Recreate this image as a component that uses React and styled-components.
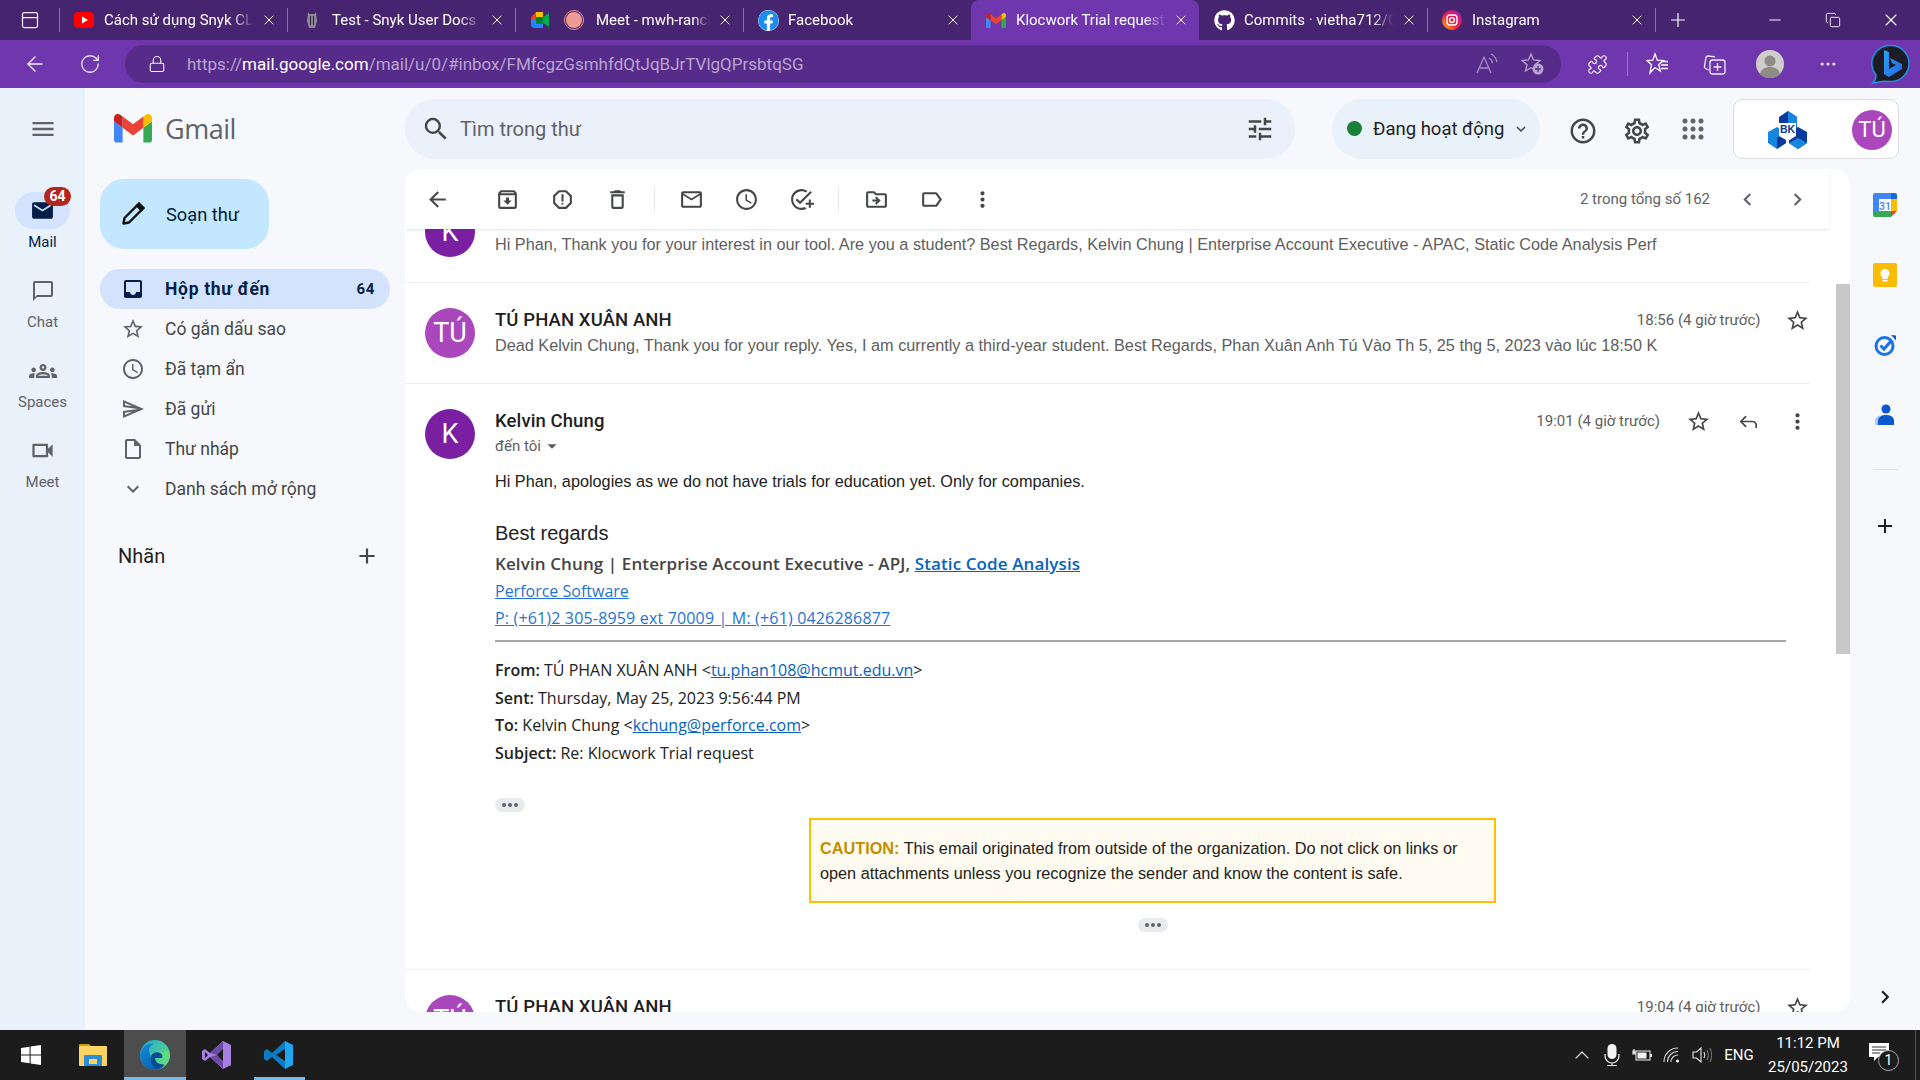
import styled, { createGlobalStyle } from "styled-components";
import { ArrowLeft, RotateCw, Lock, Minus, Plus, X, ChevronUp, PanelTop, Copy, MoreHorizontal, Puzzle, Reply } from "lucide-react";
import { FaFacebook, FaGithub } from "react-icons/fa";
import {
  MdArrowBack,
  MdOutlineArchive,
  MdOutlineReport,
  MdOutlineDelete,
  MdMailOutline,
  MdOutlineSchedule,
  MdOutlineAddTask,
  MdOutlineDriveFileMove,
  MdOutlineLabel,
  MdMoreVert,
  MdChevronLeft,
  MdChevronRight,
  MdStarBorder,
  MdArrowDropDown,
  MdSearch,
  MdOutlineTune,
  MdOutlineHelpOutline,
  MdOutlineSettings,
  MdExpandMore,
  MdMenu,
  MdMail,
  MdOutlineChatBubbleOutline,
  MdOutlineGroups,
  MdOutlineVideocam,
  MdInbox,
  MdOutlineSend,
  MdOutlineInsertDriveFile,
  MdAdd,
} from "react-icons/md";

const GlobalStyle = createGlobalStyle`
  html, body { margin: 0; padding: 0; background: #f6f8fc; }
  * { box-sizing: border-box; }
  body { font-family: "Roboto", "Liberation Sans", sans-serif; }
`;

const tabs = [
  { title: "Cách sử dụng Snyk CLI", icon: "youtube" },
  { title: "Test - Snyk User Docs", icon: "snyk" },
  { title: "Meet - mwh-rancher", icon: "meet" },
  { title: "Facebook", icon: "facebook" },
  { title: "Klocwork Trial request", icon: "gmail", active: true },
  { title: "Commits · vietha712/Cpp", icon: "github" },
  { title: "Instagram", icon: "instagram" },
];

function GmailLogo({ size = 38 }) {
  return (
    <svg width={size} height={size * 0.75} viewBox="52 42 88 66">
      <path fill="#4285f4" d="M58 108h14V74L52 59v43c0 3.32 2.69 6 6 6" />
      <path fill="#34a853" d="M120 108h14c3.32 0 6-2.69 6-6V59l-20 15" />
      <path fill="#fbbc04" d="M120 48v26l20-15v-8c0-7.42-8.47-11.65-14.4-7.2" />
      <path fill="#ea4335" d="M72 74V48l24 18 24-18v26L96 92" />
      <path fill="#c5221f" d="M52 51v8l20 15V48l-5.6-4.2c-5.94-4.45-14.4-.22-14.4 7.2" />
    </svg>
  );
}

function TabIcon({ name }) {
  if (name === "youtube")
    return (
      <svg width="22" height="22" viewBox="0 0 22 22">
        <rect x="1" y="3" width="20" height="16" rx="4" fill="#f00" />
        <path d="M9 7.5v7l6-3.5z" fill="#fff" />
      </svg>
    );
  if (name === "snyk")
    return (
      <svg width="20" height="20" viewBox="0 0 20 20">
        <path d="M6 2l1.5 2h5L14 2l1 9-2 7H7l-2-7z" fill="#8c8794" />
        <path d="M8 6h1v9H8zM11 6h1v9h-1z" fill="#2c2440" />
      </svg>
    );
  if (name === "meet")
    return (
      <svg width="20" height="20" viewBox="0 0 20 20">
        <path d="M1 7l5-5h7v5H6v3H1z" fill="#ea4335" />
        <path d="M6 2h7v5H6z" fill="#fbbc04" />
        <path d="M1 10h5v4h7v4H5a4 4 0 0 1-4-4z" fill="#2684fc" />
        <path d="M6 7h7v7H6z" fill="#00832d" />
        <path d="M13 7l6-4v14l-6-4z" fill="#00ac47" />
      </svg>
    );
  if (name === "facebook") return <FaFacebook size={21} color="#1b8cf2" style={{ background: "#fff", borderRadius: "50%" }} />;
  if (name === "gmail") return <GmailLogo size={20} />;
  if (name === "github") return <FaGithub size={21} color="#fff" />;
  return (
    <svg width="20" height="20" viewBox="0 0 20 20">
      <defs>
        <linearGradient id="ig" x1="0" y1="1" x2="1" y2="0">
          <stop offset="0" stopColor="#fdc70c" />
          <stop offset="0.45" stopColor="#f0203f" />
          <stop offset="1" stopColor="#a517c4" />
        </linearGradient>
      </defs>
      <circle cx="10" cy="10" r="10" fill="url(#ig)" />
      <rect x="5" y="5" width="10" height="10" rx="3" fill="none" stroke="#fff" strokeWidth="1.4" />
      <circle cx="10" cy="10" r="2.4" fill="none" stroke="#fff" strokeWidth="1.4" />
    </svg>
  );
}

function ReadAloudIcon() {
  return (
    <svg width="26" height="24" viewBox="0 0 26 24" fill="none" stroke="#a58fc4" strokeWidth="1.3">
      <path d="M3 21L10 5l7 16M5.5 16h9" />
      <path d="M15 6c2 1 3 2.5 3.5 5M17 2c3.500 1.500 5 4 6 8" />
    </svg>
  );
}

function FavAddIcon() {
  return (
    <svg width="24" height="24" viewBox="0 0 24 24" fill="none">
      <path d="M10 2l2.500 6 6.500.5-5 4.200 1.500 6.300L10 15.700 4.500 19 6 12.700 1 8.500 7.500 8z" stroke="#b7a5cf" strokeWidth="1.3" />
      <circle cx="17" cy="17" r="5.500" fill="#b7a5cf" />
      <path d="M17 14v6M14 17h6" stroke="#572b8a" strokeWidth="1.3" />
    </svg>
  );
}

function FavoritesIcon() {
  return (
    <svg width="24" height="24" viewBox="0 0 24 24" fill="none" stroke="#fff" strokeWidth="1.3">
      <path d="M9 2l2.300 6.200 6.200.4-4.800 4L14.300 19 9 15.500 4 21l1.500-8.300L1 8.600l5.800-.4z" />
      <path d="M15 9.500h7M15 13h7M15 16.500h7" />
    </svg>
  );
}

function CollectionsIcon() {
  return (
    <svg width="24" height="24" viewBox="0 0 24 24" fill="none" stroke="#f1ecf7" strokeWidth="1.3">
      <path d="M6 18l-3.500-1.500a2 2 0 0 1-1-2.500L3 5.500A2 2 0 0 1 5.200 4L12 4.800" />
      <rect x="7" y="8" width="15" height="14" rx="2.500" />
      <path d="M14.500 11v8M10.500 15h8" />
    </svg>
  );
}

function ProfileIcon() {
  return (
    <svg width="28" height="28" viewBox="0 0 28 28">
      <circle cx="14" cy="14" r="14" fill="#cfcdc9" />
      <circle cx="14" cy="11" r="5.500" fill="#8f8c88" />
      <path d="M4 24c1-5 5-7 10-7s9 2 10 7a14 14 0 0 1-20 0z" fill="#8f8c88" />
    </svg>
  );
}

function BingLogo() {
  return (
    <svg width="40" height="40" viewBox="0 0 40 40">
      <defs>
        <linearGradient id="bingB" x1="0" y1="0" x2="1" y2="1">
          <stop offset="0" stopColor="#29a3f2" />
          <stop offset="1" stopColor="#2a66e0" />
        </linearGradient>
      </defs>
      <path d="M21 1.500a18 18 0 0 1 0 36c-3 0-7-.500-9 0l-9 1.500c2-2 3-4 3-8A18 18 0 0 1 21 1.500z" fill="#1c1c26" stroke="#1d95e6" strokeWidth="1.500" />
      <path d="M14 6l5 2v17l7-4-4-2-2-5 12 6v5l-13 8-5-3z" fill="url(#bingB)" />
    </svg>
  );
}

function BkLogo() {
  return (
    <svg width="39" height="38" viewBox="0 0 39 38">
      <path d="M20 0l9 6v11l-9 5-9-5V6z" fill="#0a3a9c" />
      <path d="M20 0l9 6v11l-9-5z" fill="#1687e0" />
      <path d="M0 21l9-5 9 5v11l-9 6-9-6z" fill="#1687e0" />
      <path d="M9 27l9-6v11l-9 6z" fill="#0a3a9c" />
      <path d="M21 21l9-5 9 5v11l-9 6-9-6z" fill="#0a3a9c" />
      <path d="M21 32l9-5 9 5-9 6z" fill="#1687e0" />
      <path d="M11 12h17v13l-8 5-9-5z" fill="#fff" />
      <text x="19.500" y="22" textAnchor="middle" fontSize="10.500" fontWeight="700" fill="#0a3a9c" fontFamily="Liberation Sans, sans-serif">BK</text>
    </svg>
  );
}

function AppsDots() {
  const dots = [];
  for (let r = 0; r < 3; r++) for (let c = 0; c < 3; c++) dots.push(<circle key={`${r}${c}`} cx={5 + c * 8} cy={5 + r * 8} r="2.5" fill="#5f6368" />);
  return (
    <svg width="26" height="26" viewBox="0 0 26 26">
      {dots}
    </svg>
  );
}

function PencilIcon() {
  return (
    <svg width="28" height="28" viewBox="0 0 28 28" fill="none" stroke="#111" strokeWidth="2.400">
      <path d="M4.500 23.500l1-5.500L18 5.500l4.500 4.500L10 22.500z" strokeLinejoin="round" />
      <path d="M18 5.500l2-2 4.500 4.500-2 2z" fill="#111" />
    </svg>
  );
}

function CalendarIcon() {
  return (
    <svg width="24" height="24" viewBox="0 0 24 24">
      <rect x="0" y="0" width="24" height="24" rx="2" fill="#fff" />
      <path d="M2 0h16v6H6v12H0V2a2 2 0 0 1 2-2z" fill="#4285f4" />
      <path d="M18 0h4a2 2 0 0 1 2 2v4h-6z" fill="#1967d2" />
      <path d="M18 6h6v12h-6z" fill="#fbbc04" />
      <path d="M0 18h18v6H2a2 2 0 0 1-2-2z" fill="#34a853" />
      <path d="M18 18h6l-6 6z" fill="#ea4335" />
      <text x="12" y="16.500" textAnchor="middle" fontSize="10.500" fontWeight="500" fill="#4285f4" fontFamily="Roboto, sans-serif">31</text>
    </svg>
  );
}

function KeepIcon() {
  return (
    <svg width="24" height="24" viewBox="0 0 24 24">
      <rect width="24" height="24" rx="2" fill="#fbbc04" />
      <circle cx="12" cy="10.500" r="4.500" fill="#fff" />
      <rect x="9.500" y="14" width="5" height="2" fill="#fff" />
      <rect x="9.500" y="17" width="5" height="1.500" fill="#fff" />
    </svg>
  );
}

function TasksIcon() {
  return (
    <svg width="24" height="24" viewBox="0 0 24 24" fill="none">
      <circle cx="11.500" cy="13" r="8.500" stroke="#1a73e8" strokeWidth="3" />
      <path d="M7.500 12.500l3.500 3.500 8-9" stroke="#1a73e8" strokeWidth="3" />
      <path d="M18 2l5 .5v5z" fill="#0b57d0" />
    </svg>
  );
}

function ContactsIcon() {
  return (
    <svg width="24" height="24" viewBox="0 0 24 24">
      <circle cx="13" cy="6" r="4.500" fill="#0b57d0" />
      <path d="M2 22v-4c0-4 4-6 9-6h4c3 0 6 2 6 6v4z" fill="#a8c7fa" />
      <path d="M5 22v-4c0-4 4-6 8-6s8 2 8 6v4z" fill="#0b57d0" />
    </svg>
  );
}

function WindowsLogo() {
  return (
    <svg width="20" height="20" viewBox="0 0 20 20" fill="#fff">
      <path d="M0 3l8.6-1.2v7.7H0zM9.6 1.6L20 0v9.500H9.600zM0 10.500h8.600v7.700L0 17zM9.600 10.500H20V20L9.600 18.400z" />
    </svg>
  );
}

function ExplorerLogo() {
  return (
    <svg width="28" height="24" viewBox="0 0 28 24">
      <path d="M0 2a1 1 0 0 1 1-1h9l2 2h-12z" fill="#d19a0b" />
      <rect x="0" y="3" width="28" height="20" rx="1" fill="#fcd45f" />
      <rect x="5" y="12" width="18" height="11" rx="1" fill="#2b8fd8" />
      <rect x="10" y="16" width="8" height="5" fill="#fcd45f" />
    </svg>
  );
}

function EdgeLogo() {
  return (
    <svg width="32" height="32" viewBox="0 0 32 32">
      <defs>
        <linearGradient id="edgeA" x1="0" y1="0" x2="1" y2="0.8">
          <stop offset="0" stopColor="#1fa6d8" />
          <stop offset="1" stopColor="#63e07a" />
        </linearGradient>
        <linearGradient id="edgeB" x1="0" y1="0" x2="0.8" y2="1">
          <stop offset="0" stopColor="#0f8fdb" />
          <stop offset="1" stopColor="#0c5aa8" />
        </linearGradient>
      </defs>
      <circle cx="16" cy="16" r="15" fill="url(#edgeA)" />
      <path d="M1 16C2 7 9 4 15 5c-6 2-6 7-3 13 3 6 9 9 14 8-3 3-6 5-10 5C7 31 1 24 1 16z" fill="url(#edgeB)" />
      <path d="M12 19c0-5 5-7 9-5 3 1 3 4 2 5h-7c0 4 4 7 9 6-2 3-5 5-7 5-4-1-6-6-6-11z" fill="#0a4a92" />
      <path d="M21 14c3 1 3 4 2 5h8c0-2 0-4-1-6-3-1-6 0-9 1z" fill="#5fdc7c" />
    </svg>
  );
}

function VsLogo() {
  return (
    <svg width="30" height="30" viewBox="0 0 30 30">
      <path d="M21 1l8 4v20l-8 4-13-12-5 4-3-2V11l3-2 5 4z" fill="#a67fe0" />
      <path d="M21 1v28l-13-12 7-2V15L8 13z" fill="#6e4aa8" />
      <path d="M21 9l-6 6 6 6z" fill="#1c1c1c" />
      <path d="M3 12v6l3-3z" fill="#1c1c1c" />
    </svg>
  );
}

function VscodeLogo() {
  return (
    <svg width="30" height="30" viewBox="0 0 30 30">
      <path d="M21 1l8 4v20l-8 4z" fill="#1fa8f1" />
      <path d="M21 1L8 13 3 9 0 11v8l3 2 5-4 13 12V21l-9-6 9-6z" fill="#0a7cc4" />
    </svg>
  );
}

function MicIcon() {
  return (
    <svg width="16" height="22" viewBox="0 0 16 22" fill="none">
      <rect x="3.500" y="0" width="9" height="15" rx="4.500" fill="#f2f2f2" />
      <path d="M1 10v2a7 7 0 0 0 14 0v-2M8 19v2.500M3 21.500h10" stroke="#f2f2f2" strokeWidth="1.200" />
    </svg>
  );
}

function BatteryIcon() {
  return (
    <svg width="20" height="14" viewBox="0 0 20 14" fill="none">
      <path d="M0.500 4.500h3M2 1v2M1 3h2v3H1z" stroke="#f2f2f2" strokeWidth="1.200" />
      <rect x="4" y="3" width="14" height="9" stroke="#f2f2f2" />
      <rect x="5.500" y="4.500" width="9" height="6" fill="#f2f2f2" />
      <rect x="18" y="6" width="2" height="3" fill="#f2f2f2" />
    </svg>
  );
}

function WifiIcon() {
  return (
    <svg width="18" height="18" viewBox="0 0 18 18" fill="none" stroke="#cfcfcf" strokeWidth="1.100">
      <path d="M1 16C1 8 7 2 15 2M4.500 16c0-6 4.500-10.500 10.500-10.500M8 16c0-4 3-7 7-7" />
      <circle cx="14.500" cy="15" r="1.600" fill="#f2f2f2" stroke="none" />
    </svg>
  );
}

function SpeakerIcon() {
  return (
    <svg width="20" height="20" viewBox="0 0 20 20" fill="none" stroke="#e8e8e8" strokeWidth="1.100">
      <path d="M1 7h3.500L9 3v14l-4.500-4H1z" />
      <path d="M12 7c1 2 1 4 0 6" />
      <path d="M15 5c1.500 3 1.500 7 0 10M18 3c2 4 2 10 0 14" stroke="#777" />
    </svg>
  );
}

function NotifyIcon() {
  return (
    <svg width="20" height="19" viewBox="0 0 20 19">
      <path d="M0 0h20v14H9l-4 4v-4H0z" fill="#fff" />
      <path d="M3 4h14M3 7h14M3 10h8" stroke="#333" strokeWidth="1" />
    </svg>
  );
}

const Page = styled.div`
  width: 1920px;
  height: 1080px;
  display: flex;
  flex-direction: column;
  overflow: hidden;
  background: #f6f8fc;
`;

const TabStrip = styled.div`
  height: 40px;
  flex: none;
  display: flex;
  align-items: stretch;
  background: #46246f;
  color: #fff;
  font-size: 15px;
`;

const StripToggle = styled.div`
  width: 59px;
  display: flex;
  align-items: center;
  justify-content: center;
  color: #f2eef8;
`;

const Tab = styled.div`
  width: 228px;
  flex: none;
  display: flex;
  align-items: center;
  position: relative;
  padding: 0 10px 0 14px;
  gap: 7px;
  background: ${(p) => (p.$active ? "#6f36ad" : "transparent")};
  border-radius: ${(p) => (p.$active ? "8px 8px 0 0" : "0")};
  &::before {
    content: "";
    display: ${(p) => (p.$plain ? "none" : "block")};
    position: absolute;
    left: 0;
    top: 8px;
    bottom: 8px;
    width: 1px;
    background: #8a73a6;
  }
`;

const TabEnd = styled.div`
  width: 1px;
  flex: none;
  margin: 8px 0;
  background: #8a73a6;
`;

const TabIconBox = styled.div`
  width: 22px;
  height: 22px;
  flex: none;
  display: flex;
  align-items: center;
  justify-content: center;
`;

const RecDot = styled.div`
  width: 20px;
  height: 20px;
  flex: none;
  margin: 0 3px 0 6px;
  border-radius: 50%;
  background: #ef9a92;
  border: 2px solid #46246f;
  outline: 1.5px solid #ef9a92;
  outline-offset: -1px;
`;

const TabTitle = styled.div`
  flex: 1;
  min-width: 0;
  white-space: nowrap;
  overflow: hidden;
  padding-left: 2px;
  mask-image: linear-gradient(to right, #000 85%, transparent);
`;

const WinButtons = styled.div`
  margin-left: auto;
  display: flex;
  align-items: center;
`;

const WinButton = styled.div`
  width: 58px;
  display: flex;
  justify-content: center;
  color: #fff;
`;

const PlusBox = styled.div`
  width: 44px;
  display: flex;
  align-items: center;
  justify-content: center;
`;

const ToolBar = styled.div`
  height: 48px;
  flex: none;
  display: flex;
  align-items: center;
  background: #6f36ad;
  color: #f1ecf7;
  padding-left: 23px;
`;

const BarIcon = styled.div`
  width: 24px;
  height: 24px;
  flex: none;
  display: flex;
  align-items: center;
  justify-content: center;
  margin-left: ${(p) => (p.$auto ? "auto" : `${p.$ml || 0}px`)};
  color: ${(p) => p.$color || "inherit"};
  svg {
    flex: none;
  }
`;

const BarSep = styled.div`
  width: 1px;
  height: 24px;
  background: #9b77c9;
  margin-left: 18px;
  margin-right: 18px;
`;

const AddressPill = styled.div`
  width: 1436px;
  height: 38px;
  margin-left: 23px;
  flex: none;
  display: flex;
  align-items: center;
  border-radius: 19px;
  background: #572b8a;
  padding: 0 16px 0 20px;
`;

const Url = styled.div`
  margin-left: 18px;
  font-size: 17px;
  color: #b7a5cf;
  white-space: nowrap;
  span {
    color: #fff;
  }
`;

const Avatar = styled.div`
  width: ${(p) => p.$size || 50}px;
  height: ${(p) => p.$size || 50}px;
  flex: none;
  border-radius: 50%;
  background: ${(p) => p.$bg};
  color: #fff;
  display: flex;
  align-items: center;
  justify-content: center;
  font-size: ${(p) => p.$font || 27}px;
`;

const Main = styled.div`
  flex: 1;
  min-height: 0;
  display: flex;
`;

const Rail = styled.nav`
  width: 85px;
  flex: none;
  background: #e9f1fb;
  padding-top: 29px;
  display: flex;
  flex-direction: column;
  align-items: center;
`;

const RailMenu = styled.div`
  height: 24px;
  margin-bottom: 51px;
  display: flex;
  align-items: center;
  color: #5f6368;
`;

const RailItem = styled.div`
  width: 85px;
  height: 80px;
  display: flex;
  flex-direction: column;
  align-items: center;
`;

const RailPill = styled.div`
  width: 55px;
  height: 37px;
  border-radius: 18.5px;
  position: relative;
  display: flex;
  align-items: center;
  justify-content: center;
  background: ${(p) => (p.$active ? "#d3e3fd" : "transparent")};
  color: ${(p) => (p.$active ? "#041e49" : "#5f6368")};
`;

const RailBadge = styled.div`
  position: absolute;
  left: 29px;
  top: -5px;
  width: 27px;
  height: 19px;
  border-radius: 10px;
  background: #b3261e;
  color: #fff;
  font-size: 14px;
  font-weight: 700;
  text-align: center;
  line-height: 19px;
`;

const RailLabel = styled.div`
  margin-top: 4px;
  font-size: 15px;
  line-height: 18px;
  color: ${(p) => (p.$active ? "#041e49" : "#5f6368")};
`;

const Center = styled.div`
  flex: 1;
  min-width: 0;
  display: flex;
  flex-direction: column;
`;

const Header = styled.header`
  height: 81px;
  flex: none;
  display: flex;
  align-items: center;
`;

const Brand = styled.div`
  width: 320px;
  flex: none;
  padding-left: 29px;
  display: flex;
  align-items: center;
  gap: 13px;
`;

const BrandName = styled.div`
  font-size: 27px;
  color: #5f6368;
  font-family: "Open Sans", sans-serif;
  letter-spacing: -0.5px;
`;

const Search = styled.div`
  width: 890px;
  height: 60px;
  flex: none;
  border-radius: 30px;
  background: #eaf1fb;
  display: flex;
  align-items: center;
  padding: 0 20px 0 16px;
  color: #444746;
`;

const SearchText = styled.div`
  margin-left: 9px;
  flex: 1;
  font-size: 20px;
  color: #5f6368;
`;

const Status = styled.div`
  width: 208px;
  height: 60px;
  margin-left: 37px;
  flex: none;
  border-radius: 30px;
  background: #e9f1fb;
  display: flex;
  align-items: center;
  padding-left: 15px;
  font-size: 18.5px;
  color: #1f1f1f;
`;

const StatusDot = styled.div`
  width: 15px;
  height: 15px;
  border-radius: 50%;
  background: #188038;
  margin-right: 11px;
`;

const HeadIcon = styled.div`
  width: 30px;
  height: 30px;
  flex: none;
  margin-left: ${(p) => p.$ml}px;
  margin-top: ${(p) => p.$mt || 0}px;
  display: flex;
  align-items: center;
  justify-content: center;
  color: #444746;
`;

const Account = styled.div`
  width: 166px;
  height: 60px;
  margin-left: 25px;
  flex: none;
  display: flex;
  align-items: center;
  padding: 2px 6px 0 34px;
  gap: 45px;
  background: #fff;
  border: 1px solid #dadce0;
  border-radius: 10px;
`;

const Below = styled.div`
  flex: 1;
  min-height: 0;
  display: flex;
`;

const Sidebar = styled.aside`
  width: 320px;
  flex: none;
  padding-top: 10px;
`;

const Compose = styled.div`
  width: 169px;
  height: 70px;
  margin-left: 15px;
  border-radius: 24px;
  background: #c2e7ff;
  display: flex;
  align-items: center;
  padding-left: 19px;
  gap: 19px;
  font-size: 18.25px;
  color: #001d35;
`;

const NavList = styled.div`
  margin-top: 20px;
`;

const NavRow = styled.div`
  width: 290px;
  height: 40px;
  margin-left: 15px;
  border-radius: 20px;
  background: ${(p) => (p.$active ? "#d3e3fd" : "transparent")};
  color: ${(p) => (p.$active ? "#041e49" : "#444746")};
  font-weight: ${(p) => (p.$active ? 700 : 400)};
  letter-spacing: ${(p) => (p.$active ? "0.7px" : "0")};
  display: flex;
  align-items: center;
  padding: 0 15px 0 20.5px;
  gap: 20.5px;
  font-size: 17.5px;
  svg {
    color: ${(p) => (p.$active ? "#041e49" : "#5f6368")};
  }
`;

const NavCount = styled.div`
  margin-left: auto;
  font-size: 15px;
`;

const LabelsHead = styled.div`
  height: 30px;
  margin: 32px 25px 0 33px;
  display: flex;
  align-items: center;
  justify-content: space-between;
  font-size: 20px;
  color: #1f1f1f;
  svg {
    color: #444746;
  }
`;

const Card = styled.main`
  width: 1445px;
  flex: none;
  height: 843px;
  background: #fff;
  border-radius: 16px;
  display: flex;
  flex-direction: column;
  overflow: hidden;
`;

const CardBar = styled.div`
  height: 60px;
  flex: none;
  margin-right: 21px;
  display: flex;
  align-items: center;
  padding: 0 19px 0 20px;
  position: relative;
  z-index: 2;
  background: #fff;
  box-shadow: 0 1px 2px rgba(60, 64, 67, 0.15);
  color: #444746;
`;

const BarGroup = styled.div`
  display: flex;
  gap: ${(p) => p.$gap ?? 30}px;
  margin-left: ${(p) => p.$ml || 0}px;
`;

const ToolDivider = styled.div`
  width: 1px;
  height: 24px;
  margin: 0 ${(p) => p.$mr ?? 24.5}px 0 24px;
  background: #e3e5e8;
`;

const Pager = styled.div`
  margin-left: auto;
  display: flex;
  align-items: center;
  gap: 25px;
  font-size: 15px;
  color: #5f6368;
`;

const PagerArrows = styled.div`
  display: flex;
  gap: 25px;
`;

const CardBody = styled.div`
  flex: 1;
  min-height: 0;
  display: flex;
`;

const Thread = styled.div`
  width: 1405px;
  flex: none;
  overflow: hidden;
`;

const ScrollTrack = styled.div`
  margin-left: 26px;
  width: 14px;
  flex: none;
  padding-top: 55px;
`;

const ScrollThumb = styled.div`
  height: 370px;
  background: #c8c8c8;
`;

const Message = styled.article`
  display: flex;
  align-items: flex-start;
  gap: 20px;
  padding: 25px 0 ${(p) => p.$pb ?? 25}px 20px;
  margin-top: ${(p) => p.$mt || 0}px;
  border-bottom: 1px solid #eceff1;
`;

const MessageMain = styled.div`
  flex: 1;
  min-width: 0;
`;

const MetaRow = styled.div`
  height: 24px;
  display: flex;
  align-items: center;
  color: #444746;
`;

const Sender = styled.div`
  font-size: 18.5px;
  font-weight: 500;
  letter-spacing: 0.1px;
  color: #1f1f1f;
  margin-right: auto;
`;

const Time = styled.div`
  font-size: 15px;
  color: #5e5e5e;
  margin-right: ${(p) => p.$mr}px;
`;

const MetaIcon = styled.div`
  width: 25px;
  height: 25px;
  flex: none;
  display: flex;
  align-items: center;
  justify-content: center;
  margin-left: ${(p) => p.$ml || 0}px;
`;

const Snippet = styled.div`
  margin-top: 1px;
  font-family: "Liberation Sans", Arial, sans-serif;
  font-size: 16.25px;
  line-height: 24px;
  color: #5e5e5e;
  white-space: nowrap;
`;

const ToMe = styled.div`
  margin-top: 1px;
  display: flex;
  align-items: center;
  font-size: 15px;
  line-height: 24px;
  color: #5e5e5e;
`;

const BodyLine = styled.div`
  margin-top: 11px;
  font-family: "Liberation Sans", Arial, sans-serif;
  font-size: 16.25px;
  line-height: 24px;
  color: #222;
`;

const Regards = styled.div`
  margin-top: 26px;
  font-family: "Liberation Sans", Arial, sans-serif;
  font-size: 20px;
  line-height: 28px;
  color: #222;
`;

const Signature = styled.div`
  margin-top: 3px;
  font-family: "Open Sans", sans-serif;
  font-size: 17px;
  font-weight: 600;
  line-height: 28px;
  color: #444;
  letter-spacing: 0.11px;
  a {
    color: #0563c1;
    text-decoration: underline;
  }
`;

const SigLink = styled.a`
  display: block;
  font-family: "Open Sans", sans-serif;
  font-size: 16px;
  line-height: 27px;
  letter-spacing: ${(p) => p.$ls || 0}px;
  color: #1f74cf;
  text-decoration: underline;
`;

const Rule = styled.div`
  height: 2px;
  margin: 8px 24px 0 0;
  background: #a6a6a6;
`;

const Headers = styled.div`
  margin-top: 15px;
  font-family: "Open Sans", sans-serif;
  font-size: 16px;
  line-height: 27.6px;
  color: #222;
  b {
    font-weight: 600;
  }
  a {
    color: #0563c1;
    text-decoration: underline;
  }
`;

const Dots = styled.div`
  width: 30px;
  height: 14px;
  border-radius: 7px;
  margin: ${(p) => p.$m};
  background: #e8eaed;
  color: #5f6368;
  display: flex;
  align-items: center;
  justify-content: center;
  gap: 2px;
  i {
    width: 4px;
    height: 4px;
    border-radius: 50%;
    background: #5f6368;
  }
`;

const Caution = styled.div`
  width: 687px;
  height: 85px;
  margin: 6px auto 0;
  padding: 15.5px 9px 0 9px;
  border: 2.5px solid #ffc000;
  background: #fffbf0;
  font-family: "Liberation Sans", Arial, sans-serif;
  font-size: 16.25px;
  line-height: 25px;
  color: #222;
  b {
    color: #c28e00;
  }
`;

const SidePanel = styled.aside`
  flex: 1;
  padding: 24px 0 21px;
  display: flex;
  flex-direction: column;
  align-items: center;
`;

const SideIcon = styled.div`
  width: 24px;
  height: 24px;
  flex: none;
  margin-bottom: ${(p) => p.$mb ?? 46}px;
  display: flex;
  align-items: center;
  justify-content: center;
  color: ${(p) => p.$color || "#1f1f1f"};
`;

const SideRule = styled.div`
  width: 25px;
  height: 1px;
  flex: none;
  background: #dfe3e8;
  margin: -3px 0 44px;
`;

const SideEnd = styled.div`
  margin-top: auto;
  height: 24px;
  display: flex;
  align-items: center;
  color: #1f1f1f;
`;

const Taskbar = styled.footer`
  height: 50px;
  flex: none;
  display: flex;
  background: #1c1c1c;
  color: #fff;
`;

const TaskButton = styled.div`
  width: 62px;
  height: 50px;
  flex: none;
  position: relative;
  display: flex;
  align-items: center;
  justify-content: center;
  background: ${(p) => (p.$active ? "#4d4d4d" : "transparent")};
  &::after {
    content: "";
    display: ${(p) => (p.$running ? "block" : "none")};
    position: absolute;
    left: ${(p) => (p.$active ? 0 : 6)}px;
    right: ${(p) => (p.$active ? 0 : 5)}px;
    bottom: 0;
    height: 3px;
    background: #76b9ed;
  }
`;

const Tray = styled.div`
  margin-left: auto;
  display: flex;
  align-items: center;
`;

const TrayIcon = styled.div`
  width: 30px;
  display: flex;
  justify-content: center;
  color: #e8e8e8;
`;

const Lang = styled.div`
  width: 44px;
  text-align: center;
  font-size: 15px;
`;

const Clock = styled.div`
  width: 94px;
  text-align: center;
  font-size: 15px;
  line-height: 24px;
`;

const Notify = styled.div`
  width: 48px;
  height: 40px;
  position: relative;
  display: flex;
  align-items: center;
  justify-content: center;
  padding-bottom: 6px;
`;

const NotifyCount = styled.div`
  position: absolute;
  left: 23px;
  top: 15px;
  width: 21px;
  height: 21px;
  border-radius: 50%;
  border: 1px solid #aaa;
  background: #1c1c1c;
  font-size: 14px;
  line-height: 19px;
  text-align: center;
`;

const DesktopEdge = styled.div`
  width: 13px;
  align-self: stretch;
  border-right: 1px solid #555;
  margin-right: 4px;
`;

const railItems = [
  { label: "Mail", icon: <MdMail size={25} />, active: true, badge: "64" },
  { label: "Chat", icon: <MdOutlineChatBubbleOutline size={24} /> },
  { label: "Spaces", icon: <MdOutlineGroups size={28} /> },
  { label: "Meet", icon: <MdOutlineVideocam size={27} /> },
];

const navItems = [
  { label: "Hộp thư đến", icon: <MdInbox size={24} />, active: true, count: "64" },
  { label: "Có gắn dấu sao", icon: <MdStarBorder size={24} /> },
  { label: "Đã tạm ẩn", icon: <MdOutlineSchedule size={24} /> },
  { label: "Đã gửi", icon: <MdOutlineSend size={24} /> },
  { label: "Thư nháp", icon: <MdOutlineInsertDriveFile size={24} /> },
  { label: "Danh sách mở rộng", icon: <MdExpandMore size={24} /> },
];

const EllipsisPill = ({ m }) => (
  <Dots $m={m}>
    <i />
    <i />
    <i />
  </Dots>
);

export default function App() {
  return (
    <Page>
      <GlobalStyle />
      <TabStrip>
        <StripToggle>
          <PanelTop size={20} strokeWidth={1.5} />
        </StripToggle>
        {tabs.map((t, i) => (
          <Tab key={t.title} $active={t.active} $plain={t.active || i === 5}>
            <TabIconBox>
              <TabIcon name={t.icon} />
            </TabIconBox>
            {t.icon === "meet" && <RecDot />}
            <TabTitle>{t.title}</TabTitle>
            <X size={16} strokeWidth={1.5} />
          </Tab>
        ))}
        <TabEnd />
        <PlusBox>
          <Plus size={22} strokeWidth={1.3} />
        </PlusBox>
        <WinButtons>
          <WinButton>
            <Minus size={18} strokeWidth={1.3} />
          </WinButton>
          <WinButton>
            <Copy size={16} strokeWidth={1.3} />
          </WinButton>
          <WinButton>
            <X size={20} strokeWidth={1.3} />
          </WinButton>
        </WinButtons>
      </TabStrip>

      <ToolBar>
        <BarIcon>
          <ArrowLeft size={24} strokeWidth={1.4} />
        </BarIcon>
        <BarIcon $ml={31}>
          <RotateCw size={22} strokeWidth={1.4} />
        </BarIcon>
        <AddressPill>
          <BarIcon>
            <Lock size={18} strokeWidth={1.5} />
          </BarIcon>
          <Url>
            https://<span>mail.google.com</span>/mail/u/0/#inbox/FMfcgzGsmhfdQtJqBJrTVlgQPrsbtqSG
          </Url>
          <BarIcon $auto>
            <ReadAloudIcon />
          </BarIcon>
          <BarIcon $ml={22}>
            <FavAddIcon />
          </BarIcon>
        </AddressPill>
        <BarIcon $ml={24}>
          <Puzzle size={21} strokeWidth={1.4} />
        </BarIcon>
        <BarSep />
        <BarIcon>
          <FavoritesIcon />
        </BarIcon>
        <BarIcon $ml={33}>
          <CollectionsIcon />
        </BarIcon>
        <BarIcon $ml={31}>
          <ProfileIcon />
        </BarIcon>
        <BarIcon $ml={34}>
          <MoreHorizontal size={20} strokeWidth={1.6} />
        </BarIcon>
        <BarIcon $ml={38}>
          <BingLogo />
        </BarIcon>
      </ToolBar>

      <Main>
        <Rail>
          <RailMenu>
            <MdMenu size={28} />
          </RailMenu>
          {railItems.map((r) => (
            <RailItem key={r.label}>
              <RailPill $active={r.active}>
                {r.icon}
                {r.badge && <RailBadge>{r.badge}</RailBadge>}
              </RailPill>
              <RailLabel $active={r.active}>{r.label}</RailLabel>
            </RailItem>
          ))}
        </Rail>

        <Center>
          <Header>
            <Brand>
              <GmailLogo />
              <BrandName>Gmail</BrandName>
            </Brand>
            <Search>
              <MdSearch size={30} />
              <SearchText>Tìm trong thư</SearchText>
              <MdOutlineTune size={30} />
            </Search>
            <Status>
              <StatusDot />
              Đang hoạt động
              <MdExpandMore size={18} color="#444746" style={{ marginLeft: 8 }} />
            </Status>
            <HeadIcon $ml={28} $mt={4}>
              <MdOutlineHelpOutline size={30} />
            </HeadIcon>
            <HeadIcon $ml={24} $mt={4}>
              <MdOutlineSettings size={30} />
            </HeadIcon>
            <HeadIcon $ml={26}>
              <AppsDots />
            </HeadIcon>
            <Account>
              <BkLogo />
              <Avatar $size={40} $bg="#ab47bc" $font={22}>
                TÚ
              </Avatar>
            </Account>
          </Header>

          <Below>
            <Sidebar>
              <Compose>
                <PencilIcon />
                Soạn thư
              </Compose>
              <NavList>
                {navItems.map((n) => (
                  <NavRow key={n.label} $active={n.active}>
                    {n.icon}
                    {n.label}
                    {n.count && <NavCount>{n.count}</NavCount>}
                  </NavRow>
                ))}
              </NavList>
              <LabelsHead>
                Nhãn
                <MdAdd size={26} />
              </LabelsHead>
            </Sidebar>

            <Card>
              <CardBar>
                <BarGroup>
                  <MdArrowBack size={25} />
                </BarGroup>
                <BarGroup $ml={44.5}>
                  <MdOutlineArchive size={25} />
                  <MdOutlineReport size={25} />
                  <MdOutlineDelete size={25} />
                </BarGroup>
                <ToolDivider />
                <BarGroup>
                  <MdMailOutline size={25} />
                  <MdOutlineSchedule size={25} />
                  <MdOutlineAddTask size={25} />
                </BarGroup>
                <ToolDivider $mr={25} />
                <BarGroup>
                  <MdOutlineDriveFileMove size={25} />
                  <MdOutlineLabel size={25} />
                  <MdMoreVert size={25} style={{ marginLeft: -4 }} />
                </BarGroup>
                <Pager>
                  2 trong tổng số 162
                  <PagerArrows>
                    <MdChevronLeft size={25} />
                    <MdChevronRight size={25} />
                  </PagerArrows>
                </Pager>
              </CardBar>

              <CardBody>
                <Thread>
                  <Message $mt={-47}>
                    <Avatar $bg="#7b1fa2">K</Avatar>
                    <MessageMain>
                      <MetaRow>
                        <Sender>Kelvin Chung</Sender>
                        <Time $mr={24.5}>18:50 (4 giờ trước)</Time>
                        <MetaIcon>
                          <MdStarBorder size={25} />
                        </MetaIcon>
                      </MetaRow>
                      <Snippet>
                        Hi Phan, Thank you for your interest in our tool. Are you a student? Best Regards, Kelvin Chung | Enterprise Account Executive - APAC, Static Code Analysis Perf
                      </Snippet>
                    </MessageMain>
                  </Message>
                  <Message>
                    <Avatar $bg="#ab47bc">TÚ</Avatar>
                    <MessageMain>
                      <MetaRow>
                        <Sender>TÚ PHAN XUÂN ANH</Sender>
                        <Time $mr={24.5}>18:56 (4 giờ trước)</Time>
                        <MetaIcon>
                          <MdStarBorder size={25} />
                        </MetaIcon>
                      </MetaRow>
                      <Snippet>
                        Dead Kelvin Chung, Thank you for your reply. Yes, I am currently a third-year student. Best Regards, Phan Xuân Anh Tú Vào Th 5, 25 thg 5, 2023 vào lúc 18:50 K
                      </Snippet>
                    </MessageMain>
                  </Message>
                  <Message $pb={37}>
                    <Avatar $bg="#7b1fa2">K</Avatar>
                    <MessageMain>
                      <MetaRow>
                        <Sender>Kelvin Chung</Sender>
                        <Time $mr={26}>19:01 (4 giờ trước)</Time>
                        <MetaIcon>
                          <MdStarBorder size={25} />
                        </MetaIcon>
                        <MetaIcon $ml={25}>
                          <Reply size={23} strokeWidth={1.8} />
                        </MetaIcon>
                        <MetaIcon $ml={24}>
                          <MdMoreVert size={25} />
                        </MetaIcon>
                      </MetaRow>
                      <ToMe>
                        đến tôi
                        <MdArrowDropDown size={22} />
                      </ToMe>
                      <BodyLine>Hi Phan, apologies as we do not have trials for education yet. Only for companies.</BodyLine>
                      <Regards>Best regards</Regards>
                      <Signature>
                        Kelvin Chung | Enterprise Account Executive - APJ, <a href="#sca">Static Code Analysis</a>
                      </Signature>
                      <SigLink href="#perforce">Perforce Software</SigLink>
                      <SigLink href="#phone" $ls={0.17}>
                        P: (+61)2 305-8959 ext 70009 | M: (+61) 0426286877
                      </SigLink>
                      <Rule />
                      <Headers>
                        <div>
                          <b>From:</b> TÚ PHAN XUÂN ANH &lt;<a href="#tu">tu.phan108@hcmut.edu.vn</a>&gt;
                        </div>
                        <div>
                          <b>Sent:</b> Thursday, May 25, 2023 9:56:44 PM
                        </div>
                        <div>
                          <b>To:</b> Kelvin Chung &lt;<a href="#kc">kchung@perforce.com</a>&gt;
                        </div>
                        <div>
                          <b>Subject:</b> Re: Klocwork Trial request
                        </div>
                      </Headers>
                      <EllipsisPill m="31px 0 0" />
                      <Caution>
                        <b>CAUTION:</b> This email originated from outside of the organization. Do not click on links or open attachments unless you recognize the sender and know the content is safe.
                      </Caution>
                      <EllipsisPill m="15px auto 0" />
                    </MessageMain>
                  </Message>
                  <Message>
                    <Avatar $bg="#ab47bc">TÚ</Avatar>
                    <MessageMain>
                      <MetaRow>
                        <Sender>TÚ PHAN XUÂN ANH</Sender>
                        <Time $mr={24.5}>19:04 (4 giờ trước)</Time>
                        <MetaIcon>
                          <MdStarBorder size={25} />
                        </MetaIcon>
                      </MetaRow>
                    </MessageMain>
                  </Message>
                </Thread>
                <ScrollTrack>
                  <ScrollThumb />
                </ScrollTrack>
              </CardBody>
            </Card>

            <SidePanel>
              <SideIcon>
                <CalendarIcon />
              </SideIcon>
              <SideIcon>
                <KeepIcon />
              </SideIcon>
              <SideIcon>
                <TasksIcon />
              </SideIcon>
              <SideIcon $mb={45}>
                <ContactsIcon />
              </SideIcon>
              <SideRule />
              <SideIcon $mb={0}>
                <MdAdd size={28} />
              </SideIcon>
              <SideEnd>
                <MdChevronRight size={26} />
              </SideEnd>
            </SidePanel>
          </Below>
        </Center>
      </Main>

      <Taskbar>
        <TaskButton>
          <WindowsLogo />
        </TaskButton>
        <TaskButton>
          <ExplorerLogo />
        </TaskButton>
        <TaskButton $active $running>
          <EdgeLogo />
        </TaskButton>
        <TaskButton>
          <VsLogo />
        </TaskButton>
        <TaskButton $running>
          <VscodeLogo />
        </TaskButton>
        <Tray>
          <TrayIcon>
            <ChevronUp size={24} strokeWidth={1.1} />
          </TrayIcon>
          <TrayIcon>
            <MicIcon />
          </TrayIcon>
          <TrayIcon>
            <BatteryIcon />
          </TrayIcon>
          <TrayIcon>
            <WifiIcon />
          </TrayIcon>
          <TrayIcon>
            <SpeakerIcon />
          </TrayIcon>
          <Lang>ENG</Lang>
          <Clock>
            11:12 PM
            <br />
            25/05/2023
          </Clock>
          <Notify>
            <NotifyIcon />
            <NotifyCount>1</NotifyCount>
          </Notify>
          <DesktopEdge />
        </Tray>
      </Taskbar>
    </Page>
  );
}
